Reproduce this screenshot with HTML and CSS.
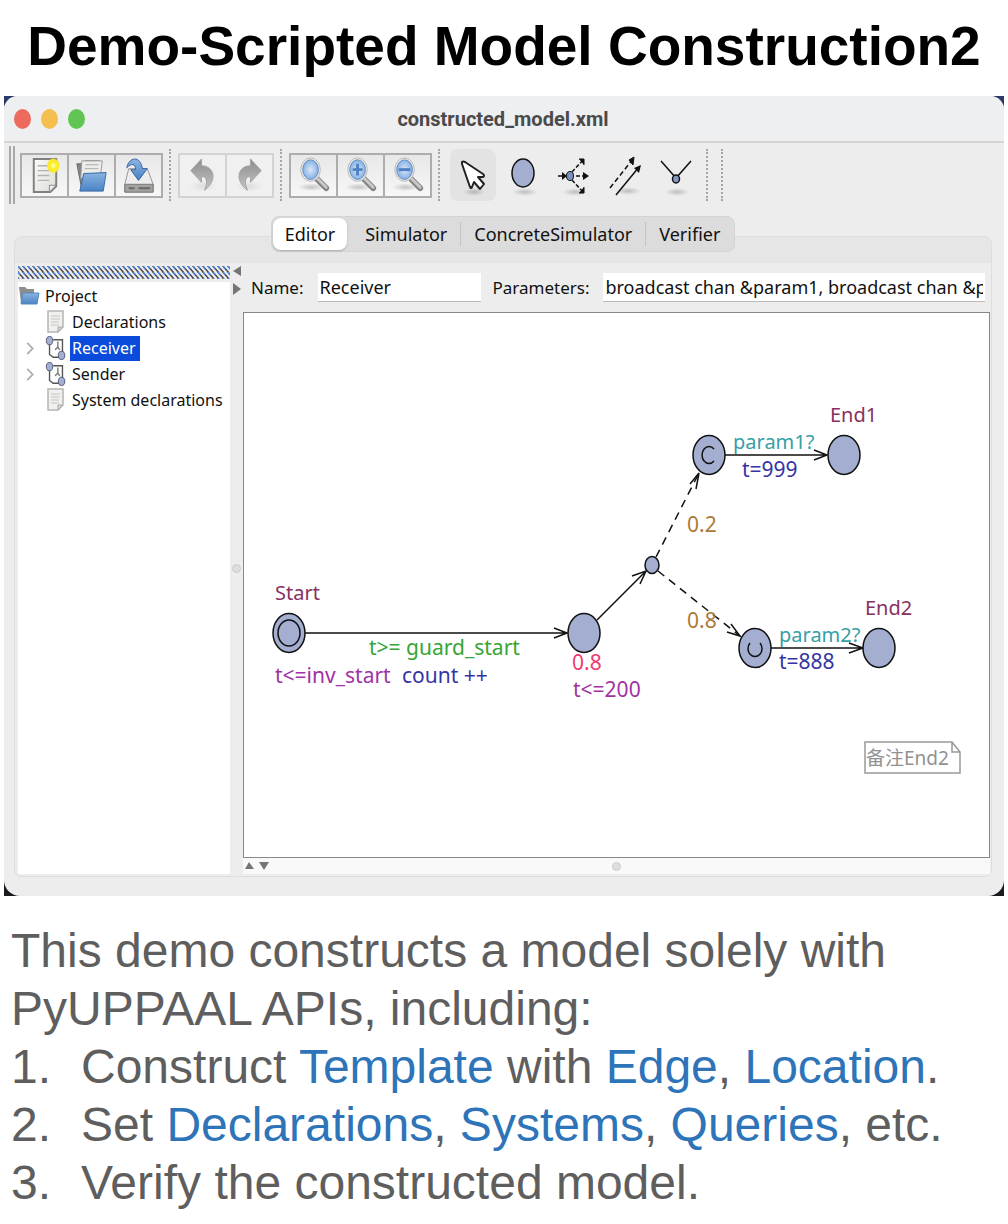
FILE: index.html
```html
<!DOCTYPE html>
<html lang="en">
<head>
<meta charset="utf-8">
<meta name="viewport" content="width=device-width, initial-scale=1">
<title>Demo-Scripted Model Construction2</title>
<link rel="stylesheet" href="styles.css">
</head>
<body>
<svg class="defs" aria-hidden="true">
  <defs>
    <linearGradient id="gPaper" x1="0" y1="0" x2="1" y2="1"><stop offset="0" stop-color="#fbfbfa"/><stop offset="1" stop-color="#dcdcd8"/></linearGradient>
    <linearGradient id="gBlue" x1="0" y1="0" x2="0" y2="1"><stop offset="0" stop-color="#8bb4e0"/><stop offset="1" stop-color="#4a83c4"/></linearGradient>
    <linearGradient id="gGrey" x1="0" y1="0" x2="0" y2="1"><stop offset="0" stop-color="#8d8d8d"/><stop offset="1" stop-color="#c4c4c4"/></linearGradient>
    <radialGradient id="gLens"><stop offset="0" stop-color="#dbe8f7"/><stop offset="1" stop-color="#86b0e4"/></radialGradient>
    <radialGradient id="gSun"><stop offset="0" stop-color="#fffde0"/><stop offset=".4" stop-color="#fdf02a"/><stop offset=".8" stop-color="#f7ea30"/><stop offset="1" stop-color="#f7ea30" stop-opacity="0"/></radialGradient>
    <radialGradient id="gShade"><stop offset="0" stop-color="#000" stop-opacity=".2"/><stop offset="1" stop-color="#000" stop-opacity="0"/></radialGradient>
    <symbol id="lens" viewBox="0 0 44 42">
      <ellipse cx="20" cy="33" rx="14" ry="4" fill="url(#gShade)"/>
      <path d="M25 24L35 34" stroke="#858585" stroke-width="6" stroke-linecap="round"/>
      <path d="M26 24L35 33" stroke="#c9c9c9" stroke-width="3" stroke-linecap="round"/>
      <ellipse cx="19" cy="15" rx="10" ry="12" fill="#e9e9e6" stroke="#b9b9b6"/>
      <ellipse cx="19" cy="15" rx="8" ry="10" fill="url(#gLens)" stroke="#5d8cc8"/>
    </symbol>
    <symbol id="sheet" viewBox="0 0 18 24">
      <path d="M1 1H16V17L11 22H1Z" fill="#f0f0ee" stroke="#b5b5b2" stroke-width="1.5"/>
      <path d="M4 6H13M4 9H13M4 12H12M4 15H12" stroke="#c4c4c2"/>
      <path d="M16 17H11V22Z" fill="#d4d4d1" stroke="#aaa"/>
    </symbol>
    <symbol id="template" viewBox="0 0 22 26">
      <path d="M8 4H18V19M4 8V20L8 23H16" fill="none" stroke="#555" stroke-width="1.5"/>
      <path d="M13 6V12L10 15M13 12L15 15" fill="none" stroke="#777" stroke-width="1.5"/>
      <ellipse cx="4" cy="5" rx="3.5" ry="4.5" fill="#a3aed0" stroke="#4c5470"/>
      <ellipse cx="17" cy="21" rx="3.5" ry="4.5" fill="#a3aed0" stroke="#4c5470"/>
    </symbol>
  </defs>
</svg>

<h1 class="title">Demo-Scripted Model Construction2</h1>

<div class="desktop">
<section class="window" aria-label="constructed_model.xml">
  <header class="titlebar">
    <span class="light red"></span><span class="light amber"></span><span class="light green"></span>
    <span class="filename">constructed_model.xml</span>
  </header>

  <div class="toolbar" role="toolbar" aria-label="Tools">
    <span class="grip"></span>
    <div class="group">
      <button class="tool" aria-label="New"><svg viewBox="0 0 44 42"><path d="M11 4H34V32L28 38H11Z" fill="url(#gPaper)" stroke="#80807c" stroke-width="2"/><path d="M15 11H27M15 16H29M15 21H27M15 26H27" stroke="#b2b2ae" stroke-width="1.5"/><path d="M34 31H27V38Z" fill="#eee" stroke="#888"/><ellipse cx="31" cy="11" rx="7" ry="8" fill="url(#gSun)"/></svg></button>
      <button class="tool" aria-label="Open"><svg viewBox="0 0 44 42"><path d="M7 9H13L15 6H30V35H12Z" fill="#858582" stroke="#696967"/><path d="M12 6H33L31 24H11Z" fill="#ececea" stroke="#999"/><path d="M16 10H29M15 14H29" stroke="#aaa"/><path d="M14 19L37 18L34 37H10Z" fill="url(#gBlue)" stroke="#3869a8"/></svg></button>
      <button class="tool" aria-label="Save"><svg viewBox="0 0 44 42"><path d="M12 14H31L37 30V38H8V30Z" fill="#ededeb" stroke="#969694"/><path d="M8 30H37V38H8Z" fill="#a3a3a0" stroke="#777"/><path d="M12 34H18M22 34H34" stroke="#686866" stroke-width="2"/><path d="M10 13C12 2 24 0 26 14H31L22 26L14 15H19C19 9 15 8 10 13Z" fill="url(#gBlue)" stroke="#3465a4"/></svg></button>
    </div>
    <span class="dots"></span>
    <div class="group dim">
      <button class="tool" aria-label="Undo"><svg viewBox="0 0 44 42"><ellipse cx="22" cy="32" rx="14" ry="6" fill="url(#gShade)" opacity=".4"/><path d="M10 16L21 4V11C34 11 38 26 24 36C28 27 26 22 21 22V28Z" fill="url(#gGrey)" stroke="#a5a5a5"/></svg></button>
      <button class="tool" aria-label="Redo"><svg viewBox="0 0 44 42"><ellipse cx="22" cy="32" rx="14" ry="6" fill="url(#gShade)" opacity=".4"/><path d="M34 16L23 4V11C10 11 6 26 20 36C16 27 18 22 23 22V28Z" fill="url(#gGrey)" stroke="#a5a5a5"/></svg></button>
    </div>
    <span class="dots"></span>
    <div class="group">
      <button class="tool" aria-label="Zoom to fit"><svg viewBox="0 0 44 42"><use href="#lens"/></svg></button>
      <button class="tool" aria-label="Zoom in"><svg viewBox="0 0 44 42"><use href="#lens"/><path d="M19 9V21M14 15H24" stroke="#4d80c4" stroke-width="3"/></svg></button>
      <button class="tool" aria-label="Zoom out"><svg viewBox="0 0 44 42"><use href="#lens"/><path d="M13 15H25" stroke="#4d80c4" stroke-width="3"/></svg></button>
    </div>
    <span class="dots"></span>
    <div class="modes">
      <button class="mode active" aria-label="Select"><svg viewBox="0 0 46 52"><ellipse cx="24" cy="43" rx="11" ry="4" fill="url(#gShade)"/><path d="M12 13Q13 12 15 13L33 25Q35 27 33 28H28L34 35L30 40L24 33L22 38Q21 40 20 38L12 15Z" fill="#fff" stroke="#222" stroke-width="2" stroke-linejoin="round"/></svg></button>
      <button class="mode" aria-label="Add location"><svg viewBox="0 0 46 52"><ellipse cx="24" cy="43" rx="13" ry="4" fill="url(#gShade)"/><ellipse cx="22" cy="24" rx="11" ry="14" fill="#a3aed0" stroke="#111" stroke-width="1.5"/></svg></button>
      <button class="mode" aria-label="Add branch point"><svg viewBox="0 0 46 52"><ellipse cx="23" cy="43" rx="13" ry="4" fill="url(#gShade)"/><path d="M6 27H15M20 23L31 11M20 31L31 43M24 27H35" fill="none" stroke="#111" stroke-width="1.5" stroke-dasharray="4 2"/><path d="M27 10H32V16M27 44H32V38" fill="#111" stroke="#111"/><path d="M31 23L37 27L31 31ZM10 23L15 27L10 31Z" fill="#111"/><ellipse cx="18" cy="27" rx="3.5" ry="4.5" fill="#7c8fbe" stroke="#111"/></svg></button>
      <button class="mode" aria-label="Add edge"><svg viewBox="0 0 46 52"><ellipse cx="25" cy="42" rx="13" ry="4" fill="url(#gShade)"/><path d="M7 39L30 10" stroke="#111" stroke-width="1.5" stroke-dasharray="5 3"/><path d="M26 11L31 8L30 16Z" fill="#111" stroke="#111"/><path d="M13 46L36 18" stroke="#111" stroke-width="1.5"/><path d="M31 19L38 16L36 24Z" fill="#111"/></svg></button>
      <button class="mode" aria-label="Add nail"><svg viewBox="0 0 46 52"><ellipse cx="23" cy="43" rx="12" ry="4" fill="url(#gShade)"/><path d="M7 12L22 29L37 12" fill="none" stroke="#111" stroke-width="1.5"/><ellipse cx="22" cy="30" rx="3.5" ry="4" fill="#8796c4" stroke="#111" stroke-width="1.5"/></svg></button>
    </div>
    <span class="dots"></span>
    <span class="dots"></span>
  </div>

  <div class="workspace">
    <nav class="tabs" role="tablist">
      <button class="tab selected" role="tab" aria-selected="true">Editor</button>
      <button class="tab" role="tab">Simulator</button>
      <button class="tab ruled" role="tab">ConcreteSimulator</button>
      <button class="tab ruled" role="tab">Verifier</button>
    </nav>
    <div class="panes">
      <aside class="sidebar">
        <svg class="hatch" aria-hidden="true"><defs><pattern id="hatch" width="5" height="6" patternUnits="userSpaceOnUse"><path d="M-1 -1L6 7M-6 -1L1 7M4 -1L11 7" stroke="#454545" stroke-width="1.5"/><path d="M0 0L2 3" stroke="#4a86e8" stroke-width="1.5"/></pattern></defs><rect width="100%" height="100%" fill="url(#hatch)"/></svg>
        <ul class="tree">
          <li class="node root"><svg class="folder" viewBox="0 0 22 22"><path d="M1 2H7L9 4H16V18H3Z" fill="#8e8e8c"/><path d="M5 8H21L19 19H3Z" fill="url(#gBlue)" stroke="#5488c0"/></svg><span class="name">Project</span></li>
          <li class="node"><svg class="glyph"><use href="#sheet"/></svg><span class="name">Declarations</span></li>
          <li class="node"><svg class="chevron" viewBox="0 0 8 14"><path d="M1 1L7 7L1 13"/></svg><svg class="glyph"><use href="#template"/></svg><span class="name current">Receiver</span></li>
          <li class="node"><svg class="chevron" viewBox="0 0 8 14"><path d="M1 1L7 7L1 13"/></svg><svg class="glyph"><use href="#template"/></svg><span class="name">Sender</span></li>
          <li class="node"><svg class="glyph"><use href="#sheet"/></svg><span class="name">System declarations</span></li>
        </ul>
      </aside>
      <div class="splitter">
        <svg class="arrows" viewBox="0 0 10 30"><path d="M9 1V11L1 6ZM1 18V30L9 24Z" fill="#757575"/></svg>
        <span class="knob"></span>
      </div>
      <main class="editor">
        <form class="fields">
          <label for="name">Name:</label>
          <input class="field short" id="name" type="text" value="Receiver">
          <label for="params">Parameters:</label>
          <input class="field" id="params" type="text" value="broadcast chan &amp;param1, broadcast chan &amp;param2">
        </form>
        <svg class="canvas" viewBox="0 0 745 544" role="img" aria-label="Receiver template">
          <g class="edge">
            <path d="M61 320H323M310 315L323 320L310 325"/>
            <path d="M353 307L402 258M388 263L402 258L396 271"/>
            <path class="dashed" d="M412 244L455 160"/><path d="M446 171L455 160L452 176"/>
            <path class="dashed" d="M414 258L496 323"/><path d="M483 319L496 323L487 311"/>
            <path d="M481 142H583M570 137L583 142L570 147"/>
            <path d="M527 335H619M605 330L619 335L605 340"/>
          </g>
          <g class="location">
            <ellipse cx="45" cy="320" rx="16" ry="19.5"/><ellipse cx="45" cy="320" rx="11" ry="13"/>
            <ellipse cx="340" cy="320" rx="16" ry="19.5"/>
            <ellipse cx="408" cy="252" rx="7" ry="8.5"/>
            <ellipse cx="465" cy="142" rx="16" ry="19.5"/><path d="M470 136A7 8.5 0 1 0 470 148"/>
            <ellipse cx="600" cy="142" rx="16" ry="19.5"/>
            <ellipse cx="511" cy="335" rx="16" ry="19.5"/><path d="M506 330A7 8 0 1 0 516 330"/>
            <ellipse cx="635" cy="335" rx="16" ry="19.5"/>
          </g>
          <g class="note"><path d="M621 429H708L716 439V460H621ZM708 429V439H716"/><text x="622" y="452">备注End2</text></g>
          <g class="labels">
            <text class="loc" x="31" y="287">Start</text>
            <text class="loc" x="586" y="109">End1</text>
            <text class="loc" x="621" y="302">End2</text>
            <text class="guard" x="125" y="342">t&gt;= guard_start</text>
            <text class="inv" x="31" y="370">t&lt;=inv_start</text>
            <text class="inv" x="329" y="384">t&lt;=200</text>
            <text class="update" x="158" y="370">count ++</text>
            <text class="update" x="498" y="164">t=999</text>
            <text class="update" x="535" y="356">t=888</text>
            <text class="sync" x="489" y="136">param1?</text>
            <text class="sync" x="535" y="329">param2?</text>
            <text class="prob" x="443" y="219">0.2</text>
            <text class="prob" x="443" y="315">0.8</text>
            <text class="rate" x="328" y="357">0.8</text>
          </g>
        </svg>
        <div class="drawer">
          <svg class="updown" viewBox="0 0 26 8"><path d="M1 7H10L5 0ZM15 0H25L20 8Z" fill="#757575"/></svg>
          <span class="knob"></span>
        </div>
      </main>
    </div>
  </div>
</section>
</div>

<div class="copy">
  <p>This demo constructs a model solely with<br>PyUPPAAL APIs, including:</p>
  <ol>
    <li><span>1.</span><span>Construct <a href="#template">Template</a> with <a href="#edge">Edge</a>, <a href="#location">Location</a>.</span></li>
    <li><span>2.</span><span>Set <a href="#declarations">Declarations</a>, <a href="#systems">Systems</a>, <a href="#queries">Queries</a>, etc.</span></li>
    <li><span>3.</span><span>Verify the constructed model.</span></li>
  </ol>
</div>
</body>
</html>
```
FILE: styles.css
```css
* { box-sizing: border-box; }

body {
  margin: 0;
  background: #fff;
  color: #111;
  font-family: "Noto Sans", "Noto Sans CJK SC", sans-serif;
  font-size: 17px;
}

button, input { font: inherit; color: inherit; }
.defs { position: absolute; width: 0; height: 0; }

.title {
  margin: 0;
  height: 96px;
  text-align: center;
  color: #000;
  font: 700 55px/92px "Liberation Sans", Arial, sans-serif;
  white-space: nowrap;
}

/* Application window */
.desktop { margin: 0 4px; background: linear-gradient(#2b3a68, #1a1a1e); }
.window { background: #ededed; border-radius: 14px 14px 16px 16px; padding-bottom: 19px; }

.titlebar {
  display: grid;
  grid-template-columns: 17px 17px 17px 1fr 73px;
  gap: 10px;
  align-items: center;
  height: 47px;
  padding: 0 10px;
  border-bottom: 2px solid #d5d5d5;
  background: #eeeff1;
  border-radius: 14px 14px 0 0;
}
.light { height: 20px; border-radius: 50%; }
.red { background: #ec6a5e; }
.amber { background: #f4bf4f; }
.green { background: #61c554; }
.filename {
  text-align: center;
  color: #4a4a4a;
  font: 700 20px/24px "Roboto", sans-serif;
}

.toolbar { display: flex; align-items: center; height: 64px; padding-left: 5px; }
.grip { width: 6px; height: 58px; border: solid #a8a8a8; border-width: 0 2px; margin-right: 5px; }
.group { display: flex; }
.tool {
  width: 49px;
  height: 45px;
  margin-right: -2px;
  padding: 0;
  border: 2px solid #adadad;
  background: linear-gradient(#e8e8e8, #f7f7f7);
}
.tool:last-child { margin-right: 0; }
.dim .tool { border-color: #d3d3d3; background: #f0f0f0; }
.tool svg { display: block; width: 100%; height: 41px; }
.dots { height: 52px; margin: 0 7px 0 6px; border-left: 2px dotted #a5a5a5; }
.modes { display: flex; gap: 5px; margin-left: 3px; }
.mode { width: 46px; height: 52px; padding: 0; border: 0; border-radius: 8px; background: transparent; }
.mode svg { display: block; width: 100%; height: 100%; }
.active { background: #e3e3e3; }

/* Tabbed workspace */
.workspace { padding: 9px 12px 0 10px; display: flex; flex-direction: column; align-items: center; }
.tabs {
  display: flex;
  align-items: center;
  height: 36px;
  padding: 2px 1px;
  border: 1px solid #d4d4d4;
  border-radius: 8px;
  background: #dcdcdc;
  font-size: 18px;
  z-index: 1;
}
.tab { border: 0; padding: 0 13px; height: 24px; line-height: 22px; background: transparent; white-space: nowrap; }
.tab.ruled { border-left: 1px solid #c4c4c4; }
.tab.selected { height: 32px; padding: 0 12px; margin-right: 5px; border-radius: 8px; background: #fff; box-shadow: 0 1px 2px #aaa; }
.panes {
  display: flex;
  align-self: stretch;
  margin-top: -16px;
  padding: 26px 1px 2px 3px;
  border: 1px solid #dedede;
  border-radius: 8px;
  background: linear-gradient(#e6e6e6 26px, #ededed 26px);
}
.sidebar { display: flex; flex-direction: column; flex: 0 0 212px; padding-top: 3px; }
.hatch { width: 100%; height: 13px; margin-bottom: 3px; }
.tree { flex: 1; margin: 0; padding: 1px 0; list-style: none; background: #fff; font-size: 16px; }
.node { display: flex; align-items: center; height: 26px; padding-left: 27px; position: relative; }
.node.root { padding-left: 0; }
.folder { width: 22px; height: 22px; margin-right: 3px; }
.glyph { width: 22px; height: 24px; margin-right: 3px; }
.name { padding: 0 2px; line-height: 25px; white-space: nowrap; }
.name.current { background: #0a4bdc; color: #fff; padding-right: 4px; }
.chevron { position: absolute; left: 8px; width: 8px; height: 13px; fill: none; stroke: #b0b0b0; stroke-width: 2; }

.splitter { display: flex; flex-direction: column; align-items: center; flex: 0 0 13px; padding: 2px 0 32px; }
.arrows { width: 10px; height: 30px; }
.knob { width: 9px; height: 9px; border: 1px solid #ccc; border-radius: 50%; background: #dedede; }
.splitter .knob { margin: auto 0; }

.editor { flex: 1; min-width: 0; }
.fields { display: flex; align-items: center; height: 49px; padding: 0 5px 0 8px; }
.field {
  flex: 1;
  min-width: 0;
  height: 29px;
  margin-left: 14px;
  padding: 0 2px;
  border: 0;
  border-bottom: 1px solid #bbb;
  background: #fff;
  font-size: 18px;
}
.field.short { flex: 0 0 163px; margin-right: 12px; }
.canvas { display: block; width: 100%; height: auto; background: #fff; border: 1px solid #888; font-size: 21px; }
.drawer { display: flex; align-items: center; justify-content: center; height: 16px; background: #f9f9f9; position: relative; }
.updown { position: absolute; left: 1px; width: 26px; height: 8px; }

/* Automaton drawing */
.edge, .location { fill: none; stroke: #111; stroke-width: 1.5; }
.dashed { stroke-dasharray: 8 6; }
.location ellipse { fill: #a3aed0; }
.note path { fill: none; stroke: #999; stroke-width: 1.5; }
.note text { fill: #919191; font-size: 19px; }
.loc { fill: #88305f; font-size: 20px; }
.guard { fill: #36a535; }
.inv { fill: #a032a5; }
.update { fill: #3634a5; }
.sync { fill: #36a0a5; font-size: 20px; }
.prob { fill: #ad7a36; }
.rate { fill: #f03a72; }

/* Description under the window */
.copy {
  padding: 26px 11px 0;
  color: #5e5e5e;
  font: 48px/58px "Liberation Sans", Arial, sans-serif;
}
.copy p, .copy ol { margin: 0; padding: 0; list-style: none; }
.copy li { display: grid; grid-template-columns: 70px 1fr; }
.copy a { color: #2e74b8; text-decoration: none; }
```
